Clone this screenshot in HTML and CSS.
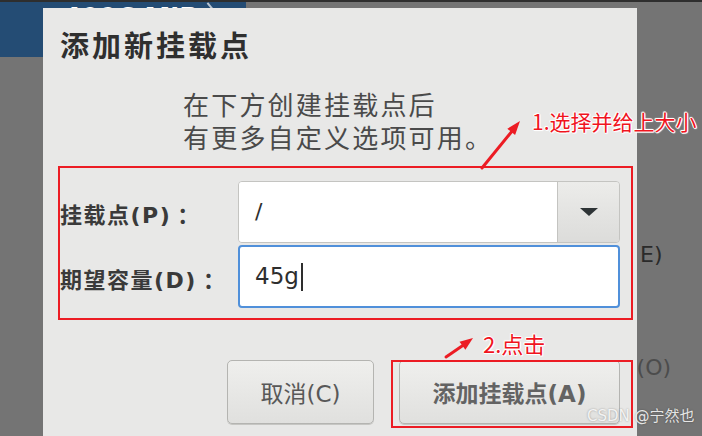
FILE: index.html
```html
<!DOCTYPE html>
<html lang="zh-CN">
<head>
<meta charset="utf-8">
<title>添加新挂载点</title>
<link rel="stylesheet" href="styles.css">
</head>
<body>
<div class="desktop">
  <div class="topbar"></div>
  <div class="header-band">
    <div class="size-clip"><span class="size">4096 MiB</span></div>
    <span class="chev"></span>
  </div>
  <span class="bg-label bg-e">E)</span>
  <span class="bg-label bg-o">((O)</span>

  <div class="dialog">
    <h1 class="title">添加新挂载点</h1>
    <p class="desc">在下方创建挂载点后<br>有更多自定义选项可用。</p>
    <div class="form">
      <label class="label">挂载点(P)<span class="colon">：</span></label>
      <div class="combo">
        <div class="combo-entry">/</div>
        <div class="combo-btn"><span class="tri"></span></div>
      </div>
      <label class="label">期望容量(D)<span class="colon">：</span></label>
      <div class="entry">45g<span class="caret"></span></div>
    </div>
    <div class="actions">
      <button class="btn cancel">取消(C)</button>
      <button class="btn add">添加挂载点(A)</button>
    </div>
  </div>

  <div class="mark mark-form"></div>
  <div class="mark mark-btn"></div>
  <svg class="arrows" width="702" height="436" viewBox="0 0 702 436">
    <line x1="482" y1="168" x2="513" y2="130" stroke="#ec1c24" stroke-width="3" stroke-linecap="round"/>
    <polygon points="520,121 515.1,135 507.3,128.8" fill="#ec1c24"/>
    <line x1="446" y1="357" x2="465" y2="344" stroke="#ec1c24" stroke-width="3" stroke-linecap="round"/>
    <polygon points="473,338 465.4,349.7 459.5,341.7" fill="#ec1c24"/>
  </svg>
  <span class="note note-1">1.选择并给上大小</span>
  <span class="note note-2">2.点击</span>
  <span class="watermark">CSDN @宁然也</span>
</div>
</body>
</html>
```

FILE: styles.css
```css
* { box-sizing: border-box; }
html, body { margin: 0; padding: 0; }
body {
  width: 702px;
  height: 436px;
  overflow: hidden;
  background: #747474;
  font-family: "DejaVu Sans", "Noto Sans CJK SC", sans-serif;
}
.desktop {
  position: relative;
  width: 702px;
  height: 436px;
  overflow: hidden;
  background: #747474;
}
.topbar {
  position: absolute;
  left: 0; top: 0;
  width: 702px; height: 2px;
  background: #2e2e2e;
}
.header-band {
  position: absolute;
  left: 0; top: 2px;
  width: 246px; height: 55px;
  background: #244c74;
  overflow: hidden;
}
.size-clip {
  position: absolute;
  left: 63px; top: 0;
  height: 6px;
  overflow: hidden;
}
.size {
  display: block;
  color: #ffffff;
  font-weight: bold;
  font-size: 26px;
  line-height: 30px;
  margin-top: 1px;
}
.chev {
  position: absolute;
  left: 209px; top: 0;
  width: 2px; height: 8px;
  background: #b9c5d2;
  transform: rotate(-40deg);
}
.bg-label {
  position: absolute;
  font-size: 22px;
  line-height: 28px;
}
.bg-e { left: 640px; top: 241px; color: #2a2a2a; }
.bg-o { left: 628px; top: 354px; color: #4c4c4c; }

.dialog {
  position: absolute;
  left: 43px; top: 8px;
  width: 594px; height: 440px;
  background: #e8e8e7;
  padding: 16px 17px 0 17px;
  display: flex;
  flex-direction: column;
}
.title {
  margin: 0;
  font-family: "Noto Sans CJK SC", sans-serif;
  font-size: 29px;
  line-height: 40px;
  font-weight: bold;
  letter-spacing: 3px;
  color: #2f2f2f;
}
.desc {
  margin: 23px 0 0 123px;
  font-family: "Noto Sans CJK SC", sans-serif;
  font-size: 26px;
  line-height: 33px;
  letter-spacing: 2.2px;
  color: #4a4a4a;
}
.form {
  margin-top: 28px;
  display: grid;
  grid-template-columns: 178px 382px;
  grid-template-rows: 62px 63px;
  row-gap: 2px;
  align-items: center;
}
.label {
  font-size: 22px;
  font-weight: bold;
  color: #3a3a3a;
  letter-spacing: 1.5px;
  white-space: nowrap;
  padding-top: 2px;
}
.colon { margin-left: 6px; }
.combo {
  height: 62px;
  display: flex;
  border: 1px solid #c4c4c1;
  border-radius: 4px;
  overflow: hidden;
}
.combo-entry {
  flex: 1;
  background: #ffffff;
  padding-left: 16px;
  font-size: 22px;
  line-height: 60px;
  color: #2e2e2e;
}
.combo-btn {
  width: 62px;
  border-left: 1px solid #c4c4c1;
  background: linear-gradient(#ececea, #dcdcda);
  display: flex;
  align-items: center;
  justify-content: center;
}
.tri {
  width: 0; height: 0;
  border-left: 9px solid transparent;
  border-right: 9px solid transparent;
  border-top: 8px solid #2e3436;
}
.entry {
  height: 63px;
  background: #ffffff;
  border: 2px solid #5090da;
  border-radius: 4px;
  padding-left: 15px;
  font-size: 23px;
  line-height: 59px;
  color: #2e2e2e;
  display: flex;
  align-items: center;
}
.caret {
  display: inline-block;
  width: 2px;
  height: 28px;
  margin-left: 2px;
  background: #2e2e2e;
}
.actions {
  margin-top: 52px;
  display: flex;
  justify-content: flex-end;
  gap: 25px;
}
.btn {
  height: 64px;
  border: 1px solid #b4b4b1;
  border-radius: 5px;
  background: linear-gradient(#efefed, #e0e0de);
  box-shadow: 0 1px 0 #c6c6c3;
  font-family: "DejaVu Sans", "Noto Sans CJK SC", sans-serif;
  font-size: 23px;
  color: #585858;
  padding: 0;
}
.cancel { width: 147px; }
.add { width: 221px; font-weight: bold; color: #636363; }

.mark {
  position: absolute;
  border: 2px solid #ec1c24;
}
.mark-form { left: 58px; top: 166px; width: 575px; height: 154px; }
.mark-btn { left: 391px; top: 360px; width: 242px; height: 68px; }
.arrows {
  position: absolute;
  left: 0; top: 0;
}
.note {
  position: absolute;
  font-family: "Noto Sans CJK SC", sans-serif;
  color: #f0141e;
  text-shadow: 1px 0 0 #fff, -1px 0 0 #fff, 0 1px 0 #fff, 0 -1px 0 #fff, 1px 1px 1px #fff, -1px -1px 1px #fff;
  white-space: nowrap;
}
.note-1 { left: 532px; top: 108px; font-size: 21px; line-height: 26px; }
.note-2 { left: 483px; top: 330px; font-size: 22px; line-height: 26px; }
.watermark {
  position: absolute;
  left: 587px; top: 406px;
  font-family: "DejaVu Sans", "Noto Sans CJK SC", sans-serif;
  font-size: 15px;
  line-height: 20px;
  color: rgba(255, 255, 255, 0.85);
  text-shadow: 0 0 2px rgba(0, 0, 0, 0.35);
  white-space: nowrap;
}
```
